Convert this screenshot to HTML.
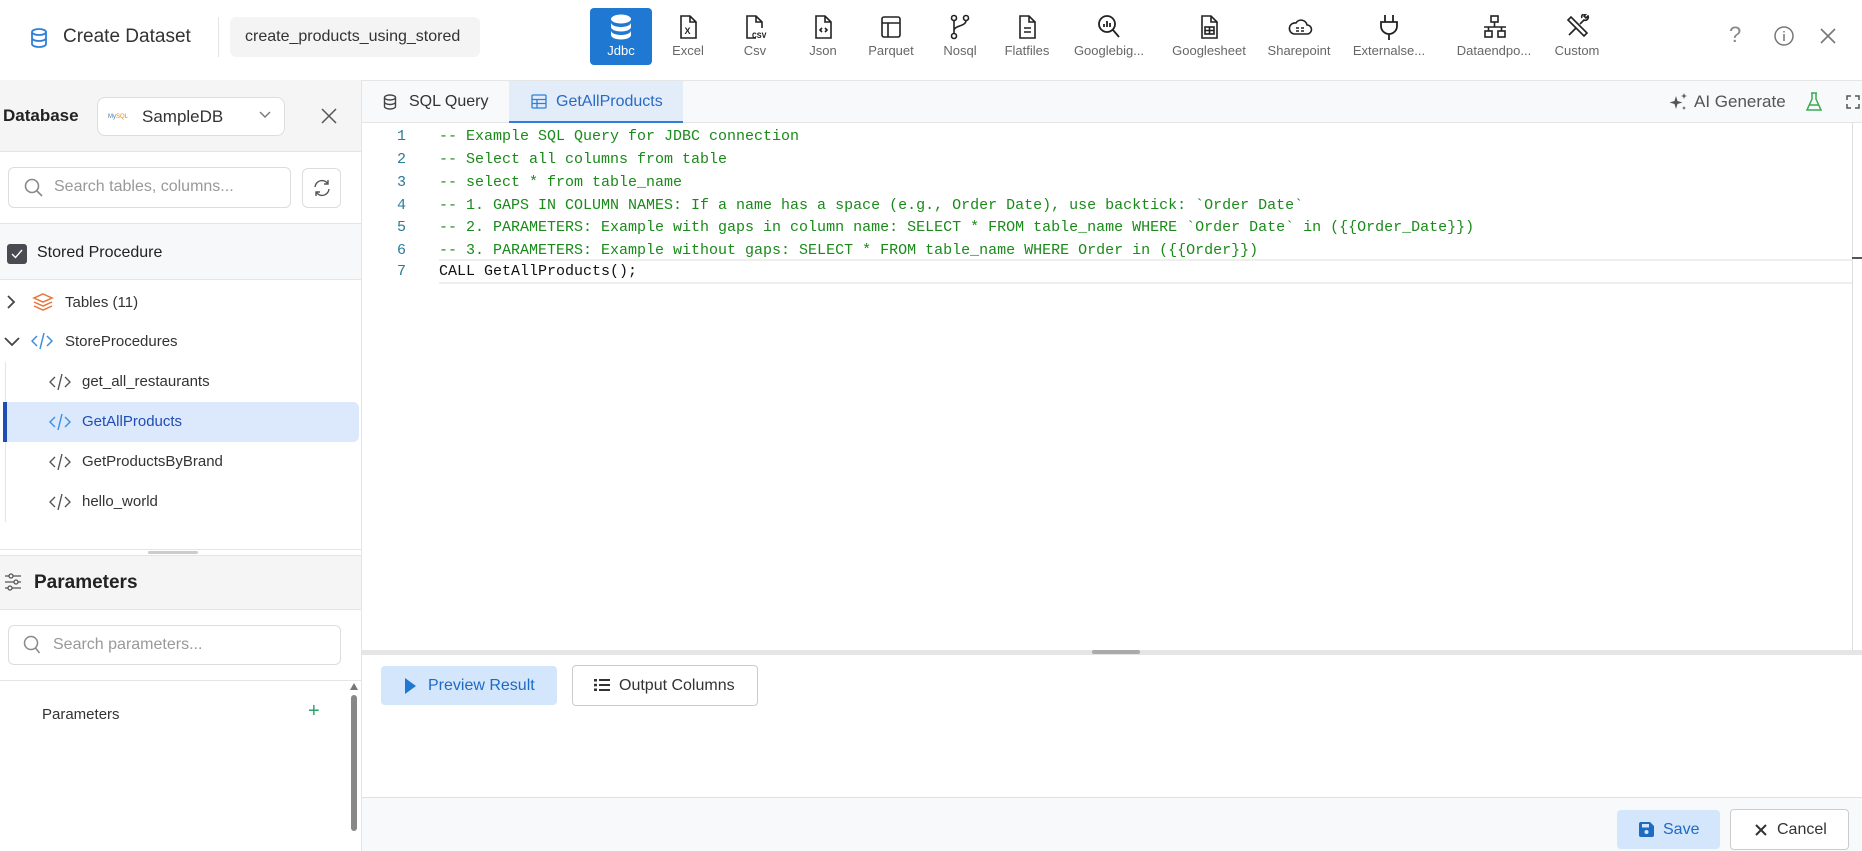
<!DOCTYPE html>
<html><head><meta charset="utf-8"><style>
*{box-sizing:border-box;margin:0;padding:0}
body{width:1862px;height:851px;position:relative;overflow:hidden;background:#fff;font-family:"Liberation Sans",Arial,sans-serif;color:#222}
.a{position:absolute}
.tb{position:absolute;top:8px;width:62px;height:57px;text-align:center}
.tb svg{position:absolute;left:19px;top:6px}
.tb span{position:absolute;left:-20px;right:-20px;top:35px;font-size:13px;color:#666;white-space:nowrap}
.code{font-family:"Liberation Mono",monospace;font-size:15px;color:#1a8a1a;white-space:pre;position:absolute;left:439px}
.ln{font-family:"Liberation Mono",monospace;font-size:15px;color:#2a7a9a;position:absolute;left:397px}
.tree{position:absolute;font-size:15px;color:#333}
</style></head><body>
<div class="a" style="left:0;top:80px;width:1862px;height:1px;background:#e5e5e5"></div>
<svg class="a" style="left:30px;top:28px" width="18" height="20" viewBox="0 0 18 20" fill="none" stroke="#2f7fd8" stroke-width="1.8"><ellipse cx="9" cy="4" rx="7" ry="3"/><path d="M2 4v12c0 1.7 3 3 7 3s7-1.3 7-3V4M2 10c0 1.7 3 3 7 3s7-1.3 7-3"/></svg>
<div class="a" style="left:63px;top:26px;font-size:19px;color:#333">Create Dataset</div>
<div class="a" style="left:218px;top:17px;width:1px;height:40px;background:#e5e5e5"></div>
<div class="a" style="left:230px;top:17px;width:250px;height:40px;background:#f4f4f4;border-radius:6px;font-size:16px;color:#333;padding:11px 0 0 15px">create_products_using_stored</div>

<div class="tb" style="left:590px;background:#1f78d1;border-radius:4px"><svg width="24" height="26" viewBox="0 0 24 26"><ellipse cx="12" cy="5" rx="10" ry="4.5" fill="#fff"/><path d="M2 8.5c0 2.5 4.5 4.5 10 4.5s10-2 10-4.5V13c0 2.5-4.5 4.5-10 4.5S2 15.5 2 13z" fill="#fff"/><path d="M2 16.5c0 2.5 4.5 4.5 10 4.5s10-2 10-4.5V21c0 2.5-4.5 4.5-10 4.5S2 23.5 2 21z" fill="#fff"/></svg><span style="color:#fff">Jdbc</span></div>
<div class="tb" style="left:657px"><svg width="24" height="26" viewBox="0 0 24 26" fill="none" stroke="#222" stroke-width="1.6"><path d="M5 2h9l6 6v16H5z M14 2v6h6"/><text x="8.5" y="20" font-size="9" font-family="Liberation Sans" fill="#222" stroke="none" font-weight="bold">X</text></svg><span>Excel</span></div>
<div class="tb" style="left:724px"><svg width="26" height="26" viewBox="0 0 26 26" fill="none" stroke="#222" stroke-width="1.6"><path d="M13 24H4V2h9l6 6v6 M13 2v6h6"/><text x="9" y="24" font-size="8" font-family="Liberation Mono" font-weight="bold" fill="#222" stroke="none">CSV</text></svg><span>Csv</span></div>
<div class="tb" style="left:792px"><svg width="24" height="26" viewBox="0 0 24 26" fill="none" stroke="#222" stroke-width="1.6"><path d="M5 2h9l6 6v16H5z M14 2v6h6 M11 14l-2 2 2 2 M14 14l2 2-2 2"/></svg><span>Json</span></div>
<div class="tb" style="left:860px"><svg width="24" height="26" viewBox="0 0 24 26" fill="none" stroke="#222" stroke-width="1.6"><rect x="3" y="3" width="18" height="20" rx="2"/><path d="M3 9h18M9 9v14"/></svg><span>Parquet</span></div>
<div class="tb" style="left:929px"><svg width="24" height="26" viewBox="0 0 24 26" fill="none" stroke="#222" stroke-width="1.6"><circle cx="6" cy="4" r="2.5"/><circle cx="18" cy="4" r="2.5"/><circle cx="6" cy="22" r="2.5"/><path d="M6 6.5v13M18 6.5c0 6-12 5-12 10"/></svg><span>Nosql</span></div>
<div class="tb" style="left:996px"><svg width="24" height="26" viewBox="0 0 24 26" fill="none" stroke="#222" stroke-width="1.6"><path d="M5 2h9l6 6v16H5z M14 2v6h6 M9 14h7M9 18h7"/></svg><span>Flatfiles</span></div>
<div class="tb" style="left:1078px"><svg width="24" height="26" viewBox="0 0 24 26" fill="none" stroke="#222" stroke-width="1.8"><circle cx="10" cy="10" r="8"/><path d="M16 16l6 7M7 13v-3M10 13V7M13 13v-4"/></svg><span>Googlebig...</span></div>
<div class="tb" style="left:1178px"><svg width="24" height="26" viewBox="0 0 24 26" fill="none" stroke="#222" stroke-width="1.6"><path d="M5 2h9l6 6v16H5z M14 2v6h6"/><rect x="8" y="13" width="9" height="7"/><path d="M8 16.5h9M12.5 13v7"/></svg><span>Googlesheet</span></div>
<div class="tb" style="left:1268px"><svg width="26" height="26" viewBox="0 0 26 26" fill="none" stroke="#222" stroke-width="1.6"><path d="M7 20h13a4.5 4.5 0 0 0 0-9 6 6 0 0 0-11-2 5.5 5.5 0 0 0-2 11z M9 14h3M14 14h3M9 17h3M14 17h3"/></svg><span>Sharepoint</span></div>
<div class="tb" style="left:1358px"><svg width="24" height="26" viewBox="0 0 24 26" fill="none" stroke="#222" stroke-width="1.8"><path d="M8 1v7M16 1v7M4 8h16v4a8 8 0 0 1-16 0z M12 20v6"/></svg><span>Externalse...</span></div>
<div class="tb" style="left:1463px"><svg width="26" height="26" viewBox="0 0 26 26" fill="none" stroke="#222" stroke-width="1.6"><rect x="9" y="2" width="7" height="6"/><rect x="3" y="17" width="7" height="6"/><rect x="16" y="17" width="7" height="6"/><path d="M12.5 8v5M2 13h22M6.5 13v4M19.5 13v4"/></svg><span>Dataendpo...</span></div>
<div class="tb" style="left:1546px"><svg width="26" height="26" viewBox="0 0 26 26" fill="none" stroke="#222" stroke-width="1.6"><path d="M3 6l3-3 16 16-3 3z M4 21l7-7M15 10l4-4a3 3 0 0 0 4 -4l-2 2-2-2 2-2a3 3 0 0 0-4 4"/></svg><span>Custom</span></div>

<div class="a" style="left:1729px;top:22px;font-size:22px;color:#888">?</div>
<svg class="a" style="left:1773px;top:25px" width="22" height="22" viewBox="0 0 22 22" fill="none" stroke="#777" stroke-width="1.5"><circle cx="11" cy="11" r="9"/><path d="M11 9v7M11 6v1.5"/></svg>
<svg class="a" style="left:1820px;top:28px" width="16" height="16" viewBox="0 0 16 16" stroke="#777" stroke-width="1.6"><path d="M1 1l14 14M15 1L1 15"/></svg>

<div class="a" style="left:361px;top:80px;width:1px;height:771px;background:#e5e5e5"></div>
<div class="a" style="left:0;top:80px;width:361px;height:72px;background:#f5f5f5;border-bottom:1px solid #e5e5e5"></div>
<div class="a" style="left:3px;top:106px;font-size:17px;font-weight:bold;color:#222">Database</div>
<div class="a" style="left:97px;top:97px;width:188px;height:39px;border:1px solid #ddd;border-radius:8px;background:#fff"></div>
<div class="a" style="left:108px;top:114px;font-size:6px;color:#3a7ab8">My<span style="color:#e08a00">SQL</span></div>
<div class="a" style="left:142px;top:107px;font-size:17px;color:#333">SampleDB</div>
<svg class="a" style="left:259px;top:111px" width="12" height="8" viewBox="0 0 12 8" fill="none" stroke="#777" stroke-width="1.4"><path d="M1 1l5 5 5-5"/></svg>
<svg class="a" style="left:321px;top:108px" width="16" height="16" viewBox="0 0 16 16" stroke="#555" stroke-width="1.5"><path d="M1 1l14 14M15 1L1 15"/></svg>

<div class="a" style="left:8px;top:167px;width:283px;height:41px;border:1px solid #ddd;border-radius:6px"></div>
<svg class="a" style="left:24px;top:178px" width="20" height="20" viewBox="0 0 20 20" fill="none" stroke="#888" stroke-width="1.6"><circle cx="8" cy="8" r="6.5"/><path d="M13 13l5 5"/></svg>
<div class="a" style="left:54px;top:178px;font-size:16px;color:#999">Search tables, columns...</div>
<div class="a" style="left:302px;top:168px;width:39px;height:40px;border:1px solid #ddd;border-radius:6px"></div>
<svg class="a" style="left:312px;top:178px" width="20" height="20" viewBox="0 0 20 20" fill="none" stroke="#555" stroke-width="1.4"><path d="M3 9a7 7 0 0 1 13-3M17 11a7 7 0 0 1-13 3M16 2v4h-4M4 18v-4h4"/></svg>

<div class="a" style="left:0;top:223px;width:361px;height:57px;background:#f7f8fa;border-top:1px solid #e5e5e5;border-bottom:1px solid #e5e5e5"></div>
<div class="a" style="left:7px;top:244px;width:20px;height:20px;background:#4a4a52;border-radius:3px"></div>
<svg class="a" style="left:11px;top:249px" width="12" height="10" viewBox="0 0 12 10" fill="none" stroke="#fff" stroke-width="1.4"><path d="M1 5l3.5 3.5L11 1"/></svg>
<div class="a" style="left:37px;top:244px;font-size:16px;color:#222">Stored Procedure</div>

<svg class="a" style="left:6px;top:294px" width="10" height="16" viewBox="0 0 10 16" fill="none" stroke="#444" stroke-width="1.8"><path d="M2 2l6 6-6 6"/></svg>
<svg class="a" style="left:32px;top:292px" width="22" height="20" viewBox="0 0 22 20" fill="none" stroke="#e8743b" stroke-width="1.5"><path d="M11 2l9 4-9 4-9-4z M2 10l9 4 9-4 M2 14l9 4 9-4"/></svg>
<div class="tree" style="left:65px;top:294px">Tables (11)</div>
<svg class="a" style="left:3px;top:336px" width="18" height="12" viewBox="0 0 18 12" fill="none" stroke="#444" stroke-width="1.8"><path d="M2 2l7 7 7-7"/></svg>
<svg class="a" style="left:31px;top:332px" width="22" height="18" viewBox="0 0 22 18" fill="none" stroke="#3b8ddd" stroke-width="1.5"><path d="M6 4L1 9l5 5M16 4l5 5-5 5M13 1L9 17"/></svg>
<div class="tree" style="left:65px;top:333px">StoreProcedures</div>
<div class="a" style="left:5px;top:362px;width:1px;height:160px;background:#e5e5e5"></div>
<div class="a" style="left:4px;top:402px;width:355px;height:40px;background:#dce9fc;border-radius:0 6px 6px 0"></div>
<div class="a" style="left:3px;top:402px;width:4px;height:40px;background:#1f4db5"></div>
<svg class="a" style="left:49px;top:373px" width="22" height="18" viewBox="0 0 22 18" fill="none" stroke="#555" stroke-width="1.4"><path d="M6 4L1 9l5 5M16 4l5 5-5 5M13 1L9 17"/></svg>
<div class="tree" style="left:82px;top:373px">get_all_restaurants</div>
<svg class="a" style="left:49px;top:413px" width="22" height="18" viewBox="0 0 22 18" fill="none" stroke="#3b8ddd" stroke-width="1.4"><path d="M6 4L1 9l5 5M16 4l5 5-5 5M13 1L9 17"/></svg>
<div class="tree" style="left:82px;top:413px;color:#1f4db5">GetAllProducts</div>
<svg class="a" style="left:49px;top:453px" width="22" height="18" viewBox="0 0 22 18" fill="none" stroke="#555" stroke-width="1.4"><path d="M6 4L1 9l5 5M16 4l5 5-5 5M13 1L9 17"/></svg>
<div class="tree" style="left:82px;top:453px">GetProductsByBrand</div>
<svg class="a" style="left:49px;top:493px" width="22" height="18" viewBox="0 0 22 18" fill="none" stroke="#555" stroke-width="1.4"><path d="M6 4L1 9l5 5M16 4l5 5-5 5M13 1L9 17"/></svg>
<div class="tree" style="left:82px;top:493px">hello_world</div>

<div class="a" style="left:0;top:549px;width:361px;height:1px;background:#e5e5e5"></div>
<div class="a" style="left:0;top:555px;width:361px;height:55px;background:#f5f5f5;border-top:1px solid #e5e5e5;border-bottom:1px solid #e5e5e5"></div>
<div class="a" style="left:148px;top:551px;width:50px;height:3px;background:#ccc;border-radius:2px"></div>
<svg class="a" style="left:4px;top:573px" width="18" height="18" viewBox="0 0 18 18" fill="none" stroke="#555" stroke-width="1.3"><path d="M1 3h16M1 9h16M1 15h16"/><circle cx="7" cy="3" r="2" fill="#f5f5f5"/><circle cx="12" cy="9" r="2" fill="#f5f5f5"/><circle cx="6" cy="15" r="2" fill="#f5f5f5"/></svg>
<div class="a" style="left:34px;top:572px;font-size:19px;font-weight:bold;color:#222">Parameters</div>
<div class="a" style="left:8px;top:625px;width:333px;height:40px;border:1px solid #ddd;border-radius:6px"></div>
<svg class="a" style="left:23px;top:635px" width="18" height="20" viewBox="0 0 18 20" fill="none" stroke="#888" stroke-width="1.5"><circle cx="8" cy="8" r="6.5"/><path d="M12.5 13l4 5"/></svg>
<div class="a" style="left:53px;top:636px;font-size:16px;color:#999">Search parameters...</div>
<div class="a" style="left:0;top:680px;width:361px;height:1px;background:#e5e5e5"></div>
<div class="a" style="left:42px;top:706px;font-size:15px;color:#333">Parameters</div>
<div class="a" style="left:308px;top:700px;font-size:20px;color:#2aa36a">+</div>
<div class="a" style="left:350px;top:683px;width:0;height:0;border-left:4px solid transparent;border-right:4px solid transparent;border-bottom:7px solid #777"></div>
<div class="a" style="left:351px;top:695px;width:6px;height:136px;background:#888;border-radius:3px"></div>

<div class="a" style="left:362px;top:81px;width:1500px;height:42px;background:#f8f9fa;border-bottom:1px solid #e5e5e5"></div>
<div class="a" style="left:509px;top:81px;width:174px;height:42px;background:#e3edfa;border-bottom:2px solid #2f7fd8"></div>
<svg class="a" style="left:383px;top:94px" width="14" height="16" viewBox="0 0 14 16" fill="none" stroke="#444" stroke-width="1.4"><ellipse cx="7" cy="3.5" rx="5.5" ry="2.5"/><path d="M1.5 3.5v9c0 1.4 2.5 2.5 5.5 2.5s5.5-1.1 5.5-2.5v-9M1.5 8c0 1.4 2.5 2.5 5.5 2.5s5.5-1.1 5.5-2.5"/></svg>
<div class="a" style="left:409px;top:93px;font-size:16px;color:#333">SQL Query</div>
<svg class="a" style="left:531px;top:94px" width="16" height="15" viewBox="0 0 16 15" fill="none" stroke="#2f7fd8" stroke-width="1.3"><rect x="1" y="1" width="14" height="13" rx="1"/><path d="M1 5.5h14M1 9.5h14M6 5.5v8.5"/></svg>
<div class="a" style="left:556px;top:93px;font-size:16px;color:#2a6ac2">GetAllProducts</div>
<svg class="a" style="left:1669px;top:92px" width="20" height="20" viewBox="0 0 20 20" fill="#555"><path d="M7 4l1.5 5 5 1.5-5 1.5L7 17l-1.5-5L.5 10.5l5-1.5z M15 1l.8 2.2L18 4l-2.2.8L15 7l-.8-2.2L12 4l2.2-.8z M15 14l.6 1.5 1.5.5-1.5.5L15 18l-.6-1.5-1.5-.5 1.5-.5z"/></svg>
<div class="a" style="left:1694px;top:92px;font-size:17px;color:#555">AI Generate</div>
<svg class="a" style="left:1806px;top:92px" width="16" height="20" viewBox="0 0 16 20" fill="none" stroke="#3aaa55" stroke-width="1.5"><path d="M5 1h6M6 1v6L1 18h14L10 7V1M3 13h10"/></svg>
<svg class="a" style="left:1846px;top:95px" width="14" height="14" viewBox="0 0 14 14" fill="none" stroke="#555" stroke-width="1.5"><path d="M1 5V1h4M9 1h4v4M13 9v4H9M5 13H1V9"/></svg>

<div class="a" style="left:1852px;top:123px;width:1px;height:527px;background:#ddd"></div>
<div class="a" style="left:1852px;top:257px;width:10px;height:2px;background:#555"></div>
<div class="a" style="left:439px;top:259px;width:1413px;height:25px;border-top:2px solid #eee;border-bottom:2px solid #eee"></div>
<div class="ln" style="top:128px">1</div><div class="code" style="top:128px">-- Example SQL Query for JDBC connection</div>
<div class="ln" style="top:151px">2</div><div class="code" style="top:151px">-- Select all columns from table</div>
<div class="ln" style="top:174px">3</div><div class="code" style="top:174px">-- select * from table_name</div>
<div class="ln" style="top:197px">4</div><div class="code" style="top:197px">-- 1. GAPS IN COLUMN NAMES: If a name has a space (e.g., Order Date), use backtick: `Order Date`</div>
<div class="ln" style="top:219px">5</div><div class="code" style="top:219px">-- 2. PARAMETERS: Example with gaps in column name: SELECT * FROM table_name WHERE `Order Date` in ({{Order_Date}})</div>
<div class="ln" style="top:242px">6</div><div class="code" style="top:242px">-- 3. PARAMETERS: Example without gaps: SELECT * FROM table_name WHERE Order in ({{Order}})</div>
<div class="ln" style="top:263px">7</div><div class="code" style="top:263px;color:#111">CALL GetAllProducts();</div>

<div class="a" style="left:362px;top:650px;width:1500px;height:5px;background:#e5e5e5"></div>
<div class="a" style="left:1092px;top:650px;width:48px;height:4px;background:#aaa;border-radius:2px"></div>
<div class="a" style="left:381px;top:666px;width:176px;height:39px;background:#d3e6fb;border-radius:4px"></div>
<div class="a" style="left:405px;top:678px;width:0;height:0;border-top:8px solid transparent;border-bottom:8px solid transparent;border-left:11px solid #1f78d1"></div>
<div class="a" style="left:428px;top:677px;font-size:16px;color:#1f6ac2">Preview Result</div>
<div class="a" style="left:572px;top:665px;width:186px;height:41px;border:1px solid #ccc;border-radius:4px;background:#fff"></div>
<svg class="a" style="left:594px;top:678px" width="16" height="14" viewBox="0 0 16 14" fill="#333"><rect x="0" y="1" width="3" height="2.5"/><rect x="5" y="1" width="11" height="2"/><rect x="0" y="5.8" width="3" height="2.5"/><rect x="5" y="6" width="11" height="2"/><rect x="0" y="10.5" width="3" height="2.5"/><rect x="5" y="11" width="11" height="2"/></svg>
<div class="a" style="left:619px;top:677px;font-size:16px;color:#333">Output Columns</div>

<div class="a" style="left:362px;top:797px;width:1500px;height:54px;background:#f8f9fa;border-top:1px solid #e0e0e0"></div>
<div class="a" style="left:1617px;top:810px;width:103px;height:39px;background:#d3e6fb;border-radius:4px"></div>
<svg class="a" style="left:1639px;top:822px" width="15" height="15" viewBox="0 0 15 15" fill="#1f6ac2"><path d="M0 2a2 2 0 0 1 2-2h9l4 4v9a2 2 0 0 1-2 2H2a2 2 0 0 1-2-2z"/><rect x="3" y="2" width="7" height="3.5" fill="#d3e6fb"/><circle cx="7.5" cy="10" r="2" fill="#d3e6fb"/></svg>
<div class="a" style="left:1663px;top:821px;font-size:16px;color:#1f6ac2">Save</div>
<div class="a" style="left:1730px;top:809px;width:119px;height:41px;border:1px solid #ccc;border-radius:4px;background:#fff"></div>
<svg class="a" style="left:1755px;top:824px" width="12" height="12" viewBox="0 0 12 12" stroke="#333" stroke-width="2"><path d="M1 1l10 10M11 1L1 11"/></svg>
<div class="a" style="left:1777px;top:821px;font-size:16px;color:#333">Cancel</div>
</body></html>
